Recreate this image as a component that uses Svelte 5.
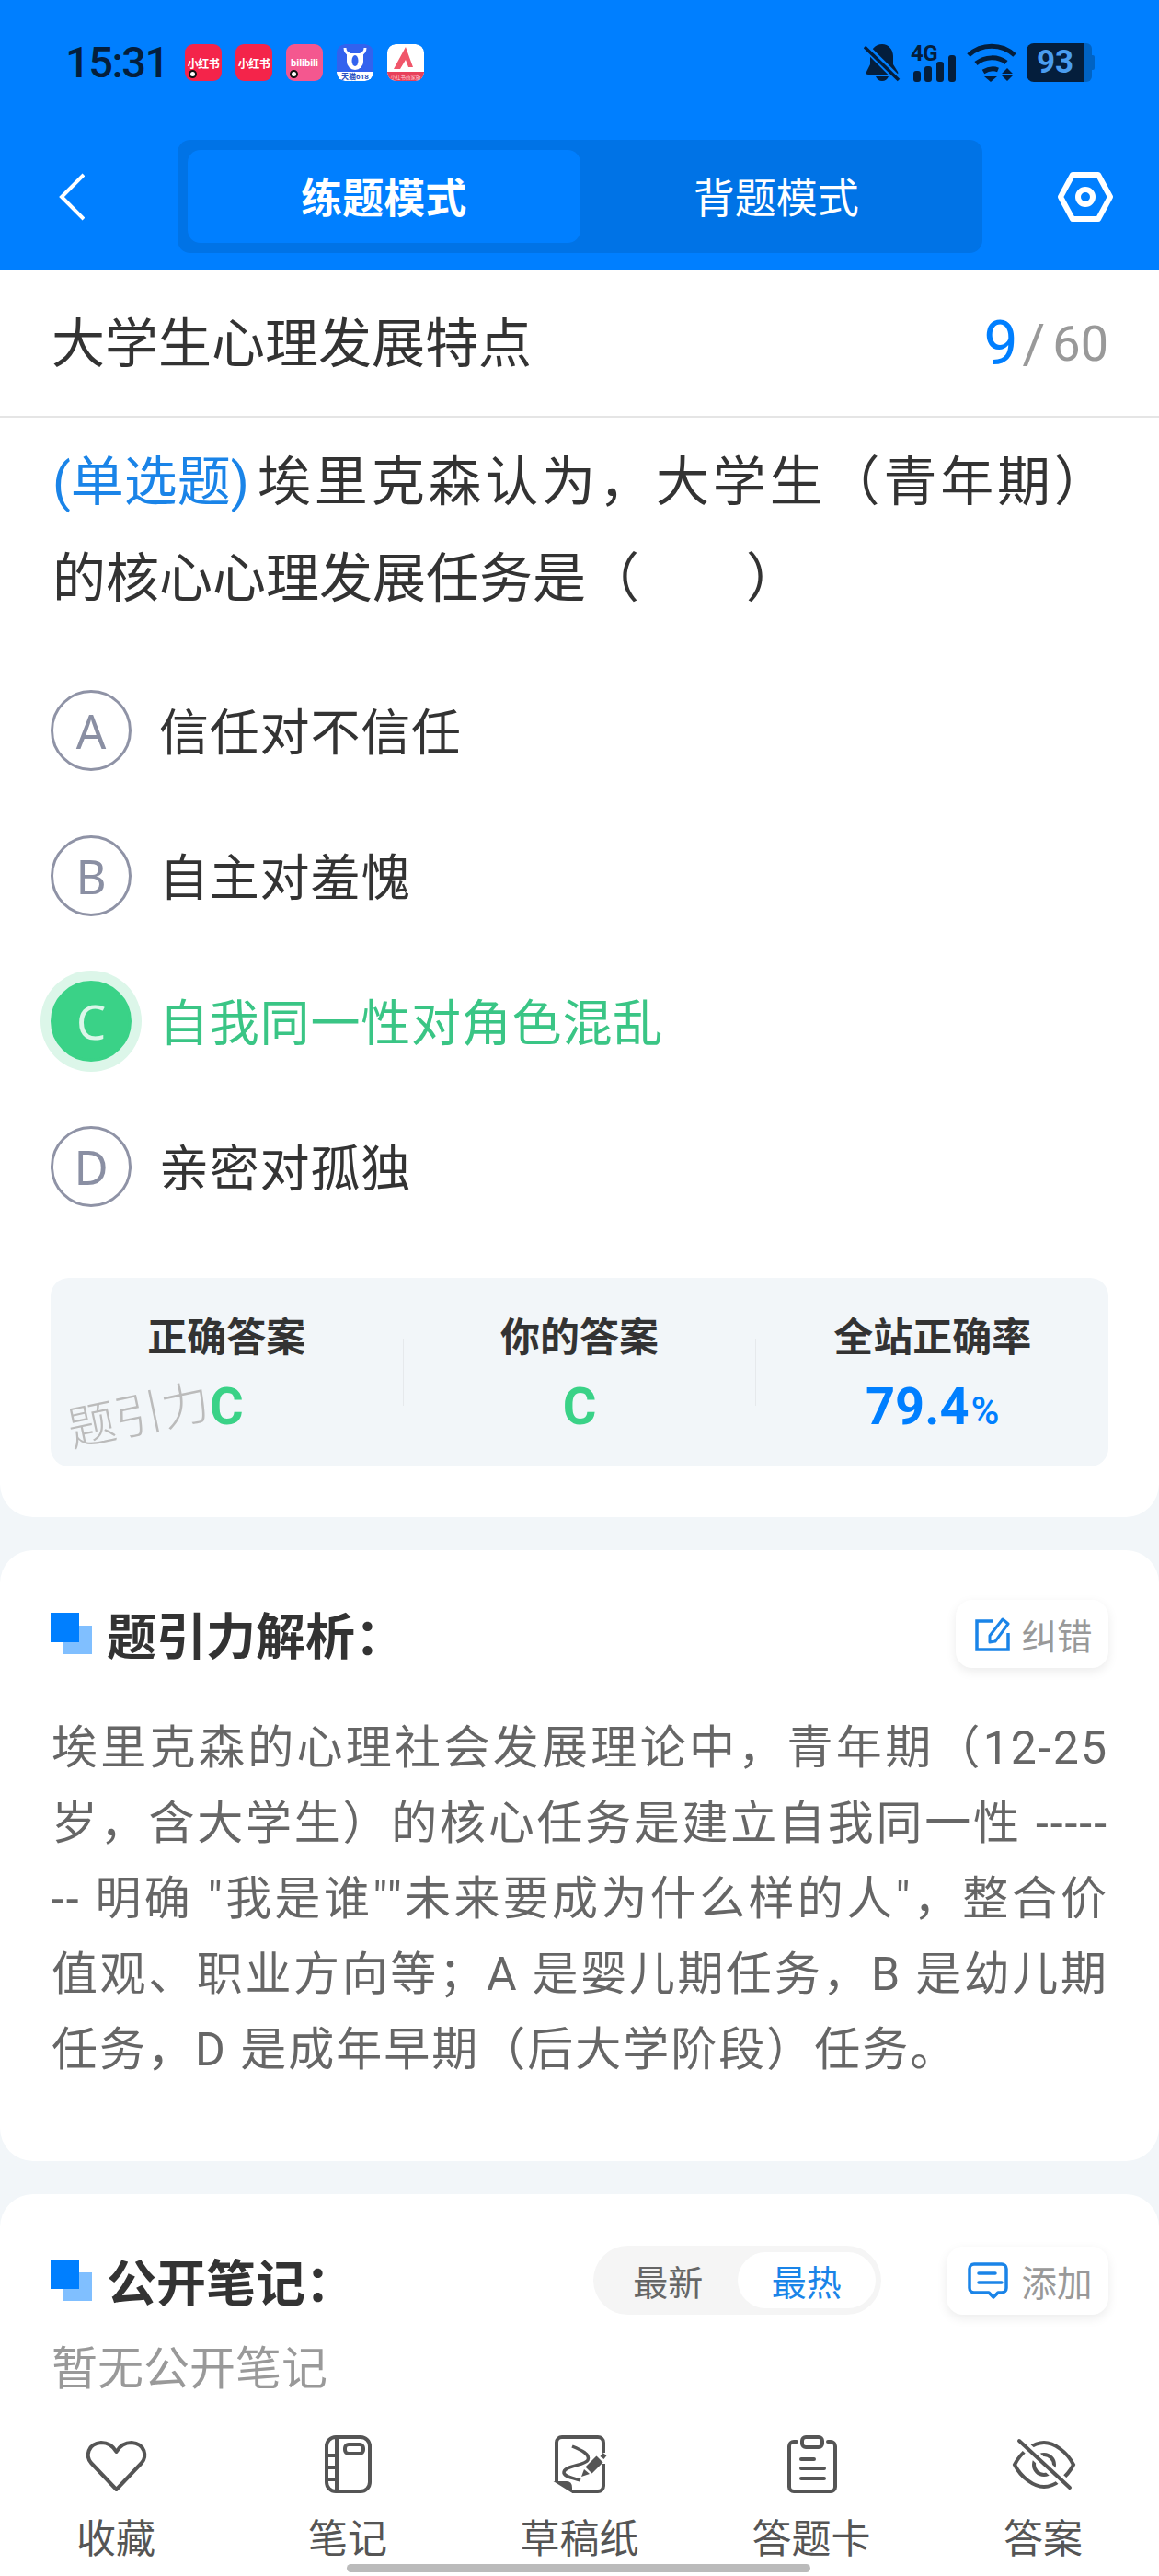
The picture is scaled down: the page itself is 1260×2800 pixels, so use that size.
<script lang="ts">
  const options = [
    { key: 'A', text: '信任对不信任' },
    { key: 'B', text: '自主对羞愧' },
    { key: 'C', text: '自我同一性对角色混乱', correct: true },
    { key: 'D', text: '亲密对孤独' }
  ];
</script>

<div class="page">
  <header class="header">
    <div class="status">
      <span class="time">15:31</span>
      <div class="apps">
        <span class="app red"><span class="app-label">小红书</span><i class="dot"></i></span>
        <span class="app red"><span class="app-label">小红书</span></span>
        <span class="app pink"><span class="app-label bili">bilibili</span><i class="dot"></i></span>
        <span class="app tmall">
          <svg width="40" height="40" viewBox="0 0 40 40">
            <rect width="40" height="40" rx="9" fill="#3262ee" />
            <path d="M0 30h40v1a9 9 0 0 1-9 9H9a9 9 0 0 1-9-9z" fill="#fff" />
            <path d="M9 4c0 4 2 6 5 7M31 4c0 4-2 6-5 7" stroke="#fff" stroke-width="3" fill="none" />
            <path d="M11 10h18v9a9 9 0 0 1-18 0z" fill="#fff" />
            <ellipse cx="20" cy="18" rx="3.500" ry="6" fill="#3262ee" />
            <text x="20" y="38" text-anchor="middle" font-size="8" font-weight="700" fill="#2a4fc0">天猫618</text>
          </svg>
        </span>
        <span class="app">
          <svg width="40" height="40" viewBox="0 0 40 40">
            <rect width="40" height="40" rx="9" fill="#fff" />
            <path d="M0 30h40v1a9 9 0 0 1-9 9H9a9 9 0 0 1-9-9z" fill="#e8405a" />
            <path d="M7 27 20 3l8 22h-5l-3-8-6 10z" fill="#f0566a" />
            <text x="20" y="37.500" text-anchor="middle" font-size="5.500" fill="#ffd6dc">小红书商家版</text>
          </svg>
        </span>
      </div>
      <div class="sys">
        <svg width="40" height="42" viewBox="0 0 40 42" fill="#041e3c">
          <path d="M20 1c7 0 12 6 12 13v9l5 8c1 2 0 3-2 3H5c-2 0-3-1-2-3l4-8v-9C7 7 13 1 20 1z" />
          <path d="M13 36h14c-1 3-4 5-7 5s-6-2-7-5z" />
          <path d="M2 4l36 36" stroke="#007fff" stroke-width="8" />
          <path d="M1 4l37 36" stroke="#041e3c" stroke-width="3.500" />
        </svg>
        <div class="signal">
          <span class="net">4G</span>
          <svg width="50" height="42" viewBox="0 0 50 42" fill="#041e3c">
            <rect x="3" y="30" width="8" height="12" rx="3" />
            <rect x="15" y="25" width="8" height="17" rx="3" />
            <rect x="28" y="20" width="8" height="22" rx="3" />
            <rect x="41" y="13" width="8" height="29" rx="3" />
          </svg>
        </div>
        <svg width="54" height="42" viewBox="0 0 54 42" fill="none" stroke="#041e3c" stroke-width="5">
          <path d="M2 13C16 0 38 0 52 13" />
          <path d="M10 22c10-8 24-8 33-1" />
          <path d="M18 31c5-3 11-4 16-2" />
          <path d="M19 36h14l-7 6z" fill="#041e3c" stroke="none" />
          <path d="M44 27l6 6H38zM38 35h12l-6 6z" fill="#041e3c" stroke="none" />
        </svg>
        <div class="battery">
          <span class="battery-level">93</span>
        </div>
      </div>
    </div>
    <nav class="nav">
      <svg class="back" width="28" height="52" viewBox="0 0 28 52" fill="none" stroke="#fff" stroke-width="4">
        <path d="M27 2 3 26l24 24" />
      </svg>
      <div class="segment">
        <button class="seg-item active">练题模式</button>
        <button class="seg-item">背题模式</button>
      </div>
      <svg class="gear" width="60" height="54" viewBox="0 0 60 54" fill="none" stroke="#fff" stroke-width="6" stroke-linejoin="round">
        <path d="M3 27 16 3h28l13 24-13 24H16z" />
        <circle cx="30" cy="27" r="8" />
      </svg>
    </nav>
  </header>

  <main class="main">
    <section class="card question-card">
      <div class="title-row">
        <span class="title">大学生心理发展特点</span>
        <span class="progress"><b>9</b><i>/</i><em>60</em></span>
      </div>
      <p class="question"><span class="tag">(单选题)</span>埃里克森认为，大学生（青年期）的核心心理发展任务是（　　）</p>
      <ul class="options">
        {#each options as opt}
          <li class="option" class:correct={opt.correct}>
            <span class="letter">{opt.key}</span>
            <span class="option-text">{opt.text}</span>
          </li>
        {/each}
      </ul>
      <div class="stats">
        <div class="stat">
          <span class="stat-label">正确答案</span>
          <span class="stat-value green">C</span>
        </div>
        <i class="stat-divider"></i>
        <div class="stat">
          <span class="stat-label">你的答案</span>
          <span class="stat-value green">C</span>
        </div>
        <i class="stat-divider"></i>
        <div class="stat">
          <span class="stat-label">全站正确率</span>
          <span class="stat-value blue">79.4<small>%</small></span>
        </div>
        <span class="watermark">题引力</span>
      </div>
    </section>

    <section class="card analysis-card">
      <div class="card-head">
        <h2 class="heading">
          <svg width="46" height="46" viewBox="0 0 46 46"><rect x="14" y="14" width="31" height="31" fill="#80bfff" /><rect width="31" height="32" fill="#007fff" /></svg>
          题引力解析：
        </h2>
        <button class="action">
          <svg width="38" height="38" viewBox="0 0 38 38" fill="none" stroke="#1a84e8" stroke-width="3.500">
            <path d="M19 5H2v31h34V18" />
            <path d="M16 28v-7L30 3l6 5-14 19z" stroke-width="3" stroke-linejoin="round" />
          </svg>
          纠错
        </button>
      </div>
      <p class="analysis">埃里克森的心理社会发展理论中，青年期（12-25 岁，含大学生）的核心任务是建立自我同一性 ------- 明确 "我是谁""未来要成为什么样的人"，整合价值观、职业方向等；A 是婴儿期任务，B 是幼儿期任务，D 是成年早期（后大学阶段）任务。</p>
    </section>

    <section class="card notes-card">
      <div class="card-head">
        <h2 class="heading">
          <svg width="46" height="46" viewBox="0 0 46 46"><rect x="14" y="14" width="31" height="31" fill="#80bfff" /><rect width="31" height="32" fill="#007fff" /></svg>
          公开笔记：
        </h2>
        <div class="sort">
          <span class="sort-item">最新</span>
          <span class="sort-item on">最热</span>
        </div>
        <button class="action add">
          <svg width="44" height="40" viewBox="0 0 44 40" fill="none" stroke="#1a84e8" stroke-width="3.500" stroke-linecap="round">
            <path d="M7 2h30a5 5 0 0 1 5 5v21a5 5 0 0 1-5 5h-4l-5 5-5-5H7a5 5 0 0 1-5-5V7a5 5 0 0 1 5-5z" stroke-linejoin="round" />
            <path d="M12 12h18M12 22h25" />
          </svg>
          添加
        </button>
      </div>
      <p class="empty">暂无公开笔记</p>
    </section>
  </main>

  <footer class="tabbar">
    <div class="tab">
      <svg width="72" height="66" viewBox="0 0 72 66" fill="none" stroke="#555" stroke-width="4" stroke-linejoin="round">
        <path d="M36.500 60 9 31C3 24 5 10 20 9c8 0 13 4 16.500 10C40 13 45 9 53 9c15 1 17 15 11 22z" />
      </svg>
      <span>收藏</span>
    </div>
    <div class="tab">
      <svg width="72" height="66" viewBox="0 0 72 66" fill="none" stroke="#555" stroke-width="4">
        <rect x="13" y="3" width="47" height="59" rx="10" />
        <path d="M24 3v59M13 23h11M13 36h11M13 49h11" />
        <rect x="33" y="11" width="20" height="10" rx="4" />
      </svg>
      <span>笔记</span>
    </div>
    <div class="tab">
      <svg width="72" height="66" viewBox="0 0 72 66" fill="none" stroke="#555" stroke-width="4">
        <path d="M11 52V9a6 6 0 0 1 6-6h39a6 6 0 0 1 6 6v11M62 32v24a6 6 0 0 1-6 6H28" />
        <path d="M11 52h11q5 0 5 6v4z" fill="#555" stroke-width="2" />
        <path d="M28 13c10 4 20 9 17 15-3 6-27 6-26 14 1 4 11 6 18 8" stroke-width="3.500" />
        <path d="M46 39l12-12" stroke-width="10" />
        <path d="M38 46l3-8 6 5z" fill="#555" stroke="none" />
        <path d="M60 22l4 3" stroke-width="5" />
      </svg>
      <span>草稿纸</span>
    </div>
    <div class="tab">
      <svg width="72" height="66" viewBox="0 0 72 66" fill="none" stroke="#555" stroke-width="4" stroke-linecap="round">
        <path d="M20 8h-3a5 5 0 0 0-5 5v44a5 5 0 0 0 5 5h40a5 5 0 0 0 5-5V13a5 5 0 0 0-5-5h-3" />
        <rect x="26" y="3" width="22" height="11" rx="4" />
        <path d="M25 27h14M25 37h25M25 48h25" />
      </svg>
      <span>答题卡</span>
    </div>
    <div class="tab">
      <svg width="72" height="66" viewBox="0 0 72 66" fill="none" stroke="#555" stroke-width="4" stroke-linecap="round">
        <path d="M5 33C12 19 26 9 37 9s25 10 32 24c-7 14-21 24-32 24S12 47 5 33z" />
        <circle cx="37" cy="33" r="11" />
        <path d="M10 7l55 51" stroke="#fff" stroke-width="11" stroke-linecap="butt" />
        <path d="M10 7l55 51" />
      </svg>
      <span>答案</span>
    </div>
    <i class="home-bar"></i>
  </footer>
</div>

<style>
  :global(body) {
    margin: 0;
    font-family: Roboto, "Noto Sans CJK SC", sans-serif;
  }

  .page {
    width: 1260px;
    height: 2800px;
    display: flex;
    flex-direction: column;
    background: #f2f6f9;
    color: #333;
    overflow: hidden;
  }

  .header {
    height: 294px;
    box-sizing: border-box;
    padding-top: 47px;
    background: #007fff;
    flex-shrink: 0;
  }

  .status {
    height: 42px;
    display: flex;
    align-items: center;
    padding: 0 70px 0 71px;
  }

  .time {
    width: 130px;
    font-size: 47px;
    font-weight: 500;
    letter-spacing: -1.5px;
    color: #041e3c;
    line-height: 42px;
  }

  .apps {
    display: flex;
    gap: 15px;
  }

  .app {
    position: relative;
    width: 40px;
    height: 40px;
    border-radius: 9px;
    overflow: hidden;
    display: flex;
    align-items: center;
    justify-content: center;
  }

  .app.red {
    background: #f4244a;
  }

  .app.pink {
    background: #f4578f;
  }

  .app-label {
    color: #fff;
    font-size: 12px;
    letter-spacing: -0.5px;
    font-weight: 700;
    white-space: nowrap;
    font-family: "Noto Sans CJK SC", sans-serif;
  }

  .bili {
    font-size: 11px;
    letter-spacing: 0;
    font-family: Roboto, sans-serif;
  }

  .dot {
    position: absolute;
    left: 4px;
    bottom: 3px;
    width: 5px;
    height: 5px;
    border-radius: 50%;
    background: #fff;
    border: 2px solid #111;
  }

  .sys {
    margin-left: auto;
    display: flex;
    align-items: center;
    gap: 11px;
  }

  .signal {
    position: relative;
    width: 50px;
    height: 42px;
  }

  .signal svg {
    display: block;
  }

  .net {
    position: absolute;
    left: 0;
    top: -1px;
    font-size: 24px;
    line-height: 24px;
    font-weight: 700;
    letter-spacing: -0.5px;
    color: #041e3c;
  }

  .battery {
    width: 62px;
    height: 42px;
    margin-right: 12px;
    position: relative;
    display: flex;
    align-items: center;
    justify-content: center;
    background: #041e3c;
    border-radius: 8px 0 0 8px;
  }

  .battery::after {
    content: "";
    position: absolute;
    left: 62px;
    top: 0;
    width: 9px;
    height: 42px;
    background: #0063c4;
    border-radius: 0 6px 6px 0;
  }

  .battery::before {
    content: "";
    position: absolute;
    left: 70px;
    top: 13px;
    width: 4px;
    height: 16px;
    background: #0063c4;
    border-radius: 0 2px 2px 0;
  }

  .battery-level {
    font-size: 35px;
    line-height: 42px;
    font-weight: 700;
    color: #4a9df0;
  }

  .nav {
    margin-top: 63px;
    height: 123px;
    display: flex;
    align-items: center;
    padding-left: 64px;
  }

  .back {
    margin-right: 101px;
  }

  .gear {
    margin-left: 82px;
  }

  .segment {
    width: 875px;
    height: 123px;
    box-sizing: border-box;
    padding: 11px;
    display: flex;
    background: #0073e6;
    border-radius: 14px;
  }

  .seg-item {
    flex: 1;
    border: none;
    background: transparent;
    color: #fff;
    font-family: "Noto Sans CJK SC", sans-serif;
    font-size: 45px;
    padding: 0 0 3px;
    border-radius: 14px;
  }

  .seg-item.active {
    background: #007fff;
    font-weight: 700;
  }

  .main {
    flex: 1;
    min-height: 0;
    overflow: hidden;
    display: flex;
    flex-direction: column;
    gap: 36px;
  }

  .card {
    background: #fff;
    border-radius: 36px;
    flex-shrink: 0;
  }

  .question-card {
    border-radius: 0 0 36px 36px;
    padding-bottom: 55px;
  }

  .title-row {
    height: 158px;
    border-bottom: 2px solid #e5e5e5;
    display: flex;
    align-items: center;
    justify-content: space-between;
    padding: 0 55px 0 56px;
  }

  .title {
    font-size: 58px;
    padding-bottom: 8px;
    font-family: "Noto Sans CJK SC", sans-serif;
  }

  .progress {
    display: flex;
    align-items: center;
    color: #999;
    font-size: 54px;
  }

  .progress b {
    font-size: 66px;
    font-weight: 400;
    color: #007fff;
  }

  .progress i {
    font-style: normal;
    font-size: 60px;
    margin: 0 8px 0 5px;
  }

  .progress em {
    font-style: normal;
  }

  .question {
    margin: 18px 0 0;
    padding: 0 56px 0 57px;
    font-size: 58px;
    line-height: 105px;
    text-align: justify;
  }

  .tag {
    display: inline-block;
    margin-right: 5px;
    color: #1a84e8;
  }

  .options {
    list-style: none;
    margin: 33px 0 0;
    padding: 0 55px;
  }

  .option {
    height: 158px;
    display: flex;
    align-items: center;
    gap: 30px;
  }

  .letter {
    width: 88px;
    height: 88px;
    box-sizing: border-box;
    border: 3px solid #8f93a6;
    border-radius: 50%;
    display: flex;
    align-items: center;
    justify-content: center;
    color: #8a8fa3;
    font-size: 51px;
    font-weight: 400;
    font-family: "Noto Sans", sans-serif;
  }

  .option-text {
    font-size: 54px;
    letter-spacing: 0.8px;
    padding-bottom: 4px;
    font-family: "Noto Sans CJK SC", sans-serif;
  }

  .option.correct .letter {
    background: #3ad287;
    border-color: #3ad287;
    color: #dcf6e9;
    box-shadow: 0 0 0 11px #dcf6e9;
  }

  .option.correct .option-text {
    color: #3ac585;
  }

  .stats {
    position: relative;
    margin: 42px 55px 0;
    height: 205px;
    background: #f2f6f9;
    border-radius: 20px;
    display: flex;
  }

  .stat {
    flex: 1;
    display: flex;
    flex-direction: column;
    align-items: center;
    padding-top: 34px;
  }

  .stat-label {
    font-size: 43px;
    line-height: 54px;
    font-weight: 700;
    font-family: "Noto Sans CJK SC", sans-serif;
  }

  .stat-value {
    margin-top: 17px;
    font-size: 56px;
    line-height: 70px;
    font-weight: 700;
  }

  .stat-value small {
    font-size: 42px;
    font-weight: 500;
    margin-left: 2px;
  }

  .green {
    color: #3ad287;
  }

  .blue {
    color: #007fff;
  }

  .stat-divider {
    width: 1px;
    height: 73px;
    align-self: center;
    background: #e6e9ec;
  }

  .watermark {
    position: absolute;
    left: 17px;
    top: 110px;
    font-size: 52px;
    line-height: 72px;
    font-weight: 300;
    color: #bbb;
    transform: rotate(-12deg);
    font-family: "Noto Sans CJK SC", sans-serif;
  }

  .analysis-card {
    padding: 54px 55px 80px;
  }

  .notes-card {
    padding: 56px 55px 60px;
  }

  .card-head {
    display: flex;
    align-items: center;
  }

  .heading {
    margin: 0;
    display: flex;
    align-items: center;
    gap: 15px;
    font-size: 54px;
    line-height: 62px;
    font-weight: 700;
    font-family: "Noto Sans CJK SC", sans-serif;
  }

  .action {
    margin-left: auto;
    width: 166px;
    height: 74px;
    box-sizing: border-box;
    padding: 0 0 0 4px;
    border: none;
    background: #fff;
    border-radius: 18px;
    box-shadow: 0 4px 12px rgba(0, 0, 0, 0.08);
    display: flex;
    align-items: center;
    justify-content: center;
    gap: 12px;
    color: #999;
    font-size: 38.500px;
    font-family: "Noto Sans CJK SC", sans-serif;
  }

  .action.add {
    margin-left: 71px;
    width: 176px;
    padding-left: 6px;
    gap: 14px;
  }

  .analysis {
    margin: 46px 0 0 1px;
    font-size: 50px;
    line-height: 82px;
    letter-spacing: 2px;
    color: #666;
    text-align: justify;
    word-break: break-all;
  }

  .sort {
    margin-left: auto;
    width: 313px;
    height: 75px;
    box-sizing: border-box;
    padding: 7px 6px;
    background: #f5f5f5;
    border-radius: 38px;
    display: flex;
    align-items: center;
  }

  .sort-item {
    flex: 1;
    height: 61px;
    display: flex;
    align-items: center;
    justify-content: center;
    font-size: 38px;
    color: #666;
    border-radius: 31px;
    font-family: "Noto Sans CJK SC", sans-serif;
  }

  .sort-item.on {
    background: #fff;
    color: #1a84e8;
  }

  .empty {
    margin: 29px 0 0 1px;
    font-size: 50px;
    line-height: 60px;
    color: #999;
  }

  .tabbar {
    position: relative;
    height: 180px;
    box-sizing: border-box;
    padding-top: 26px;
    background: #fff;
    display: grid;
    grid-template-columns: repeat(5, 1fr);
    flex-shrink: 0;
  }

  .tab {
    display: flex;
    flex-direction: column;
    align-items: center;
    color: #555;
    font-size: 43px;
    line-height: 50px;
    font-family: "Noto Sans CJK SC", sans-serif;
  }

  .tab svg {
    margin-bottom: 19px;
  }

  .home-bar {
    position: absolute;
    left: 377px;
    bottom: 4px;
    width: 504px;
    height: 9px;
    border-radius: 5px;
    background: #bbb;
  }
</style>
